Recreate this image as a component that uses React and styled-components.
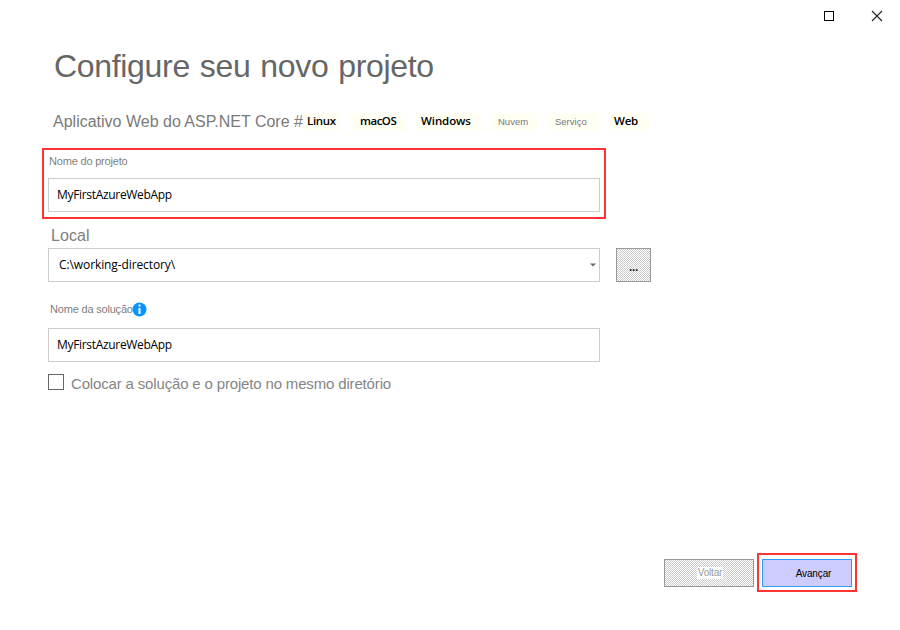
import React from "react";
import styled, { createGlobalStyle, css } from "styled-components";

const GlobalStyle = createGlobalStyle`
  * { box-sizing: border-box; }
  body { margin: 0; background: #fff; }
  button, input { font: inherit; margin: 0; }
`;

const sans = `"Liberation Sans", Arial, sans-serif`;
const ui = `"Open Sans", "Noto Sans", sans-serif`;

const Dialog = styled.main`
  width: 900px;
  height: 630px;
  display: flex;
  flex-direction: column;
  background: #fff;
  font-family: ${sans};
  overflow: hidden;
`;

const TitleBar = styled.header`
  height: 32px;
  flex: none;
  display: flex;
  justify-content: flex-end;
`;

const WindowButton = styled.button`
  width: 48px;
  height: 32px;
  padding: 0;
  border: 0;
  background: none;
  svg { display: block; }
`;

const Title = styled.h1`
  margin: 16px 0 0 54px;
  height: 37px;
  font-size: 32px;
  line-height: 37px;
  font-weight: 400;
  letter-spacing: -0.32px;
  word-spacing: 1.3px;
  color: #666;
  white-space: nowrap;
`;

const TemplateRow = styled.div`
  display: flex;
  align-items: center;
  height: 20px;
  margin: 27px 0 0 53px;
`;

const TemplateName = styled.span`
  width: 250px;
  font-size: 16px;
  line-height: 20px;
  color: #7a7a7a;
  white-space: nowrap;
`;

const Tag = styled.span`
  width: ${(p) => p.$width}px;
  height: 18px;
  margin-right: ${(p) => p.$gap}px;
  padding-left: ${(p) => p.$pad}px;
  background: #fffff4;
  font-family: ${(p) => (p.$muted ? sans : ui)};
  font-size: ${(p) => (p.$muted ? 9.5 : 11.5)}px;
  font-weight: ${(p) => (p.$muted ? 400 : 550)};
  line-height: ${(p) => (p.$muted ? 18 : 16)}px;
  letter-spacing: ${(p) => p.$spacing || 0}px;
  color: ${(p) => (p.$muted ? "#777" : "#000")};
  white-space: nowrap;
`;

const HighlightedField = styled.section`
  width: 564px;
  height: 71px;
  margin: 16px 0 0 42px;
  padding: 4px;
  border: 2px solid #f33;
`;

const Label = styled.label`
  display: flex;
  align-items: center;
  height: ${(p) => p.$height}px;
  padding: 0 0 ${(p) => (p.$large ? 0 : 10)}px ${(p) => p.$pad}px;
  font-size: ${(p) => (p.$large ? 16 : 11)}px;
  letter-spacing: ${(p) => (p.$large ? 0.1 : -0.19)}px;
  color: #808080;
  white-space: nowrap;
`;

const Field = styled.section`
  margin: ${(p) => p.$top}px 0 0 48px;
`;

const FieldRow = styled.div`
  display: flex;
  gap: 16px;
`;

const TextBox = styled.div`
  display: flex;
  align-items: center;
  justify-content: space-between;
  width: 552px;
  height: 34px;
  padding: 0 3px 1px ${(p) => p.$pad || 8}px;
  border: 1px solid #ccc;
  background: #fff;
  font-family: ${ui};
  font-size: 12px;
  letter-spacing: ${(p) => p.$spacing ?? -0.32}px;
  color: #000;
`;

/* One-pixel checkerboard: stripes combined by difference, lightened to grey and white. */
const dither = css`
  background-color: #fff;
  background-image:
    linear-gradient(#ccc, #ccc),
    linear-gradient(90deg, #000 1px, #fff 1px),
    linear-gradient(#000 1px, #fff 1px);
  background-size: 2px 2px;
  background-blend-mode: screen, difference, normal;
`;

const BrowseButton = styled.button`
  width: 35px;
  height: 34px;
  padding: 3px 0 0;
  border: 1px solid #999;
  ${dither}
  font: 600 12px/16px ${ui};
  letter-spacing: -0.3px;
  color: #000;
`;

const InfoIcon = styled.svg`
  margin: 1px 0 0 -1px;
  flex: none;
`;

const CheckRow = styled.label`
  display: flex;
  align-items: center;
  height: 20px;
  margin: 10px 0 0 48px;
  font-size: 15px;
  line-height: 18px;
  letter-spacing: -0.16px;
  color: #858585;
  white-space: nowrap;
`;

const CheckText = styled.span`
  padding-top: 3px;
`;

const CheckBox = styled.input`
  appearance: none;
  width: 16px;
  height: 16px;
  margin: 0 7px 0 0;
  border: 1px solid #666;
  background: #fff;
`;

const Footer = styled.footer`
  display: flex;
  align-items: center;
  justify-content: flex-end;
  gap: 3px;
  height: 39px;
  margin: auto 43px 38px 0;
`;

const BackButton = styled.button`
  width: 90px;
  height: 28px;
  padding: 0 0 0 2px;
  border: 1px solid #999;
  ${dither}
  font-size: 10px;
  letter-spacing: -0.2px;
  color: #999;
  span {
    display: inline-block;
    height: 12px;
    padding: 0 1px;
    line-height: 12px;
    background: #fff;
  }
`;

const NextFrame = styled.div`
  width: 100px;
  height: 39px;
  padding: 4px 3px;
  border: 2px solid #f33;
`;

const NextButton = styled.button`
  display: block;
  width: 90px;
  height: 28px;
  padding: 0 0 0 13px;
  border: 1px solid #39f;
  background: #ccf;
  font-size: 10px;
  letter-spacing: -0.15px;
  color: #000;
`;

const tags = [
  { text: "Linux", width: 37, gap: 12, pad: 4, spacing: -0.3 },
  { text: "macOS", width: 53, gap: 10, pad: 8, spacing: -0.5 },
  { text: "Windows", width: 66, gap: 10, pad: 6, spacing: -0.1 },
  { text: "Nuvem", width: 46, gap: 11, pad: 7, muted: true },
  { text: "Serviço", width: 51, gap: 11, pad: 7, muted: true },
  { text: "Web", width: 39, gap: 0, pad: 4, spacing: -0.2 },
];

export default function App() {
  return (
    <>
      <GlobalStyle />
      <Dialog>
        <TitleBar>
          <WindowButton aria-label="Maximizar">
            <svg width="48" height="32">
              <rect x="20.5" y="11.5" width="9" height="9" fill="none" stroke="#000" />
            </svg>
          </WindowButton>
          <WindowButton aria-label="Fechar">
            <svg width="48" height="32">
              <path d="M20 11l10 10M30 11L20 21" fill="none" stroke="#222" strokeWidth="1.1" />
            </svg>
          </WindowButton>
        </TitleBar>
        <Title>Configure seu novo projeto</Title>
        <TemplateRow>
          <TemplateName>Aplicativo Web do ASP.NET Core #</TemplateName>
          {tags.map((t) => (
            <Tag key={t.text} $width={t.width} $gap={t.gap} $pad={t.pad} $muted={t.muted} $spacing={t.spacing}>
              {t.text}
            </Tag>
          ))}
        </TemplateRow>
        <HighlightedField>
          <Label $height={24} $pad={1}>Nome do projeto</Label>
          <TextBox>MyFirstAzureWebApp</TextBox>
        </HighlightedField>
        <Field $top={5}>
          <Label $height={24} $pad={3} $large>Local</Label>
          <FieldRow>
            <TextBox $pad={10} $spacing={-0.1}>
              C:\working-directory\
              <svg width="6" height="4">
                <path d="M0 0.5h6L3 3.5z" fill="#666" />
              </svg>
            </TextBox>
            <BrowseButton>...</BrowseButton>
          </FieldRow>
        </Field>
        <Field $top={17}>
          <Label $height={29} $pad={2}>
            Nome da solução
            <InfoIcon width="15" height="15" viewBox="0 0 15 15">
              <circle cx="7.5" cy="7.5" r="7" fill="#0a94ff" />
              <path d="M6.5 2.5h2v2h-2zM6.5 6h2v6h-2z" fill="#fff" />
            </InfoIcon>
          </Label>
          <TextBox>MyFirstAzureWebApp</TextBox>
        </Field>
        <CheckRow>
          <CheckBox type="checkbox" />
          <CheckText>Colocar a solução e o projeto no mesmo diretório</CheckText>
        </CheckRow>
        <Footer>
          <BackButton><span>Voltar</span></BackButton>
          <NextFrame>
            <NextButton>Avançar</NextButton>
          </NextFrame>
        </Footer>
      </Dialog>
    </>
  );
}
